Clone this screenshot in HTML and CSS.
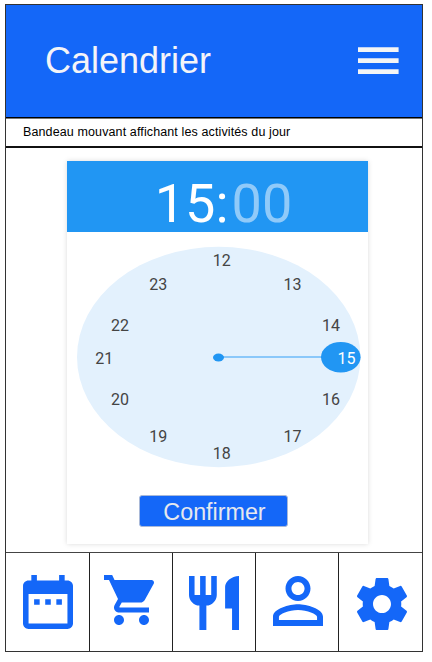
FILE: index.html
```html
<!DOCTYPE html>
<html lang="fr">
<head>
<meta charset="utf-8">
<title>Calendrier</title>
<link rel="stylesheet" href="styles.css">
</head>
<body>
<div class="app">
  <header class="header">
    <h1 class="title">Calendrier</h1>
    <svg class="menu" viewBox="0 0 41 28"><path d="M0 .3h40.6v4.7H0zM0 11.3h40.6V16H0zM0 22.3h40.6V27H0z"/></svg>
  </header>
  <div class="ticker">Bandeau mouvant affichant les activités du jour</div>
  <main class="content">
    <section class="picker">
      <div class="time"><span>15</span><span>:</span><span class="minutes">00</span></div>
      <svg class="clock" viewBox="67 232 301 246">
        <ellipse class="face" cx="218.7" cy="357" rx="141.7" ry="110.2"/>
        <path class="hand" d="M218 357H330"/>
        <ellipse class="knob" cx="218.5" cy="357.5" rx="5.5" ry="4"/>
        <ellipse class="knob" cx="340.8" cy="357.2" rx="19.8" ry="15.3"/>
        <g class="hours">
          <text x="221.8" y="266">12</text>
          <text x="292.5" y="290">13</text>
          <text x="331" y="331">14</text>
          <text class="selected" x="346.5" y="364">15</text>
          <text x="331" y="405">16</text>
          <text x="292.5" y="442">17</text>
          <text x="221.8" y="459">18</text>
          <text x="158.3" y="442">19</text>
          <text x="120" y="405">20</text>
          <text x="104.3" y="364">21</text>
          <text x="120" y="331">22</text>
          <text x="158.3" y="290">23</text>
        </g>
      </svg>
      <button class="confirm">Confirmer</button>
    </section>
  </main>
  <nav class="nav">
    <a class="tab"><svg class="calendar" viewBox="3 2 18 20" preserveAspectRatio="none"><path d="M9 11H7v2h2v-2zm4 0h-2v2h2v-2zm4 0h-2v2h2v-2zm2-7h-1V2h-2v2H8V2H6v2H5c-1.11 0-1.99.9-1.99 2L3 20c0 1.1.89 2 2 2h14c1.1 0 2-.9 2-2V6c0-1.1-.9-2-2-2zm0 16H5V9h14v11z"/></svg></a>
    <a class="tab"><svg class="cart" viewBox="1 2 20 20" preserveAspectRatio="none"><path d="M7 18c-1.1 0-1.99.9-1.99 2S5.9 22 7 22s2-.9 2-2-.9-2-2-2zM1 2v2h2l3.6 7.59-1.35 2.45c-.16.28-.25.61-.25.96 0 1.1.9 2 2 2h12v-2H7.42c-.14 0-.25-.11-.25-.25l.03-.12.9-1.63h7.45c.75 0 1.41-.41 1.75-1.03l3.58-6.49c.08-.14.12-.31.12-.48 0-.55-.45-1-1-1H5.21l-.94-2H1zm16 16c-1.1 0-1.99.9-1.99 2s.89 2 1.99 2 2-.9 2-2-.9-2-2-2z"/></svg></a>
    <a class="tab"><svg class="food" viewBox="3 2 18 20" preserveAspectRatio="none"><path d="M11 9H9V2H7v7H5V2H3v7c0 2.12 1.66 3.84 3.75 3.97V22h2.5v-9.03C11.34 12.84 13 11.12 13 9V2h-2v7zm5-3v8h2.5v8H21V2c-2.76 0-5 2.24-5 4z"/></svg></a>
    <a class="tab"><svg class="person" viewBox="4 4 16 16" preserveAspectRatio="none"><path d="M12 5.9c1.16 0 2.1.94 2.1 2.1s-.94 2.1-2.1 2.1S9.9 9.16 9.9 8s.94-2.1 2.1-2.1m0 9c2.97 0 6.1 1.46 6.1 2.1v1.1H5.9V17c0-.64 3.13-2.1 6.1-2.1M12 4C9.79 4 8 5.79 8 8s1.79 4 4 4 4-1.79 4-4-1.79-4-4-4zm0 9c-2.67 0-8 1.34-8 4v3h16v-3c0-2.66-5.33-4-8-4z"/></svg></a>
    <a class="tab"><svg class="gear" viewBox="2.27 2 19.46 20" preserveAspectRatio="none"><path d="M19.43 12.98c.04-.32.07-.64.07-.98s-.03-.66-.07-.98l2.11-1.65c.19-.15.24-.42.12-.64l-2-3.46c-.12-.22-.39-.3-.61-.22l-2.49 1c-.52-.4-1.08-.73-1.69-.98l-.38-2.65C14.46 2.18 14.25 2 14 2h-4c-.25 0-.46.18-.49.42l-.38 2.65c-.61.25-1.17.59-1.69.98l-2.49-1c-.23-.09-.49 0-.61.22l-2 3.46c-.13.22-.07.49.12.64l2.11 1.65c-.04.32-.07.65-.07.98s.03.66.07.98l-2.11 1.65c-.19.15-.24.42-.12.64l2 3.46c.12.22.39.3.61.22l2.49-1c.52.4 1.08.73 1.69.98l.38 2.65c.03.24.24.42.49.42h4c.25 0 .46-.18.49-.42l.38-2.65c.61-.25 1.17-.59 1.69-.98l2.49 1c.23.09.49 0 .61-.22l2-3.46c.12-.22.07-.49-.12-.64l-2.11-1.65zM12 15.5c-1.93 0-3.5-1.57-3.5-3.5s1.57-3.5 3.5-3.5 3.5 1.57 3.5 3.5-1.57 3.5-3.5 3.5z"/></svg></a>
  </nav>
</div>
</body>
</html>
```
FILE: styles.css
```css
* { box-sizing: border-box; }
body {
  margin: 0;
  padding: 4px 0 0 5px;
  background: #fff;
  font-family: "Liberation Sans", sans-serif;
}
.app {
  width: 418px;
  height: 648px;
  border: 1px solid #333;
  display: flex;
  flex-direction: column;
}
.header {
  height: 113px;
  display: flex;
  align-items: center;
  justify-content: space-between;
  padding: 0 23px 0 39px;
  background: #1467f8;
  border-bottom: 1px solid #000;
}
.title {
  margin: 0;
  color: #f4f4f8;
  font-size: 36px;
  font-weight: 400;
  line-height: 42px;
}
.menu { width: 41px; height: 28px; fill: #f5f5f5; }
.ticker {
  height: 30px;
  padding-left: 17px;
  border-top: 1px solid #777;
  border-bottom: 2px solid #111;
  color: #000;
  font-size: 12.5px;
  letter-spacing: .12px;
  line-height: 27px;
  white-space: nowrap;
}
.content { flex: 1; padding: 13px 0 0 61px; }
.picker {
  width: 301px;
  height: 383px;
  display: flex;
  flex-direction: column;
  align-items: center;
  background: #fff;
  box-shadow: 0 0 5px rgba(0, 0, 0, .15);
}
.time {
  width: 100%;
  height: 71px;
  padding: 11px 0 0 12px;
  display: flex;
  justify-content: center;
  background: #2196f3;
  color: #fff;
  font: 54px/64px Roboto, sans-serif;
}
.minutes { margin-left: 3px; color: #90caf9; }
.clock { display: block; width: 301px; height: 246px; }
.face { fill: #e3f1fd; }
.knob { fill: #2196f3; }
.hand { stroke: #6cbaf8; stroke-width: 1.5; }
.hours {
  fill: #444;
  font: 16px Roboto, sans-serif;
  text-anchor: middle;
}
.hours .selected { fill: #fff; }
.confirm {
  width: 149px;
  height: 32px;
  margin: 17px 0 0 -8px;
  padding: 2px 0 0 2px;
  border: 1px solid #a9b9d8;
  border-radius: 3px;
  background: #1467f8;
  color: #e6e8ee;
  font: 23.3px/28px "Liberation Sans", sans-serif;
}
.nav {
  height: 99px;
  display: grid;
  grid-template-columns: 84px 83px 83px 83px 1fr;
  border-top: 1px solid #444;
}
.tab { padding: 22px 0 0 17px; border-right: 1px solid #222; }
.tab:last-child { border-right: 0; }
.tab svg { display: block; fill: #1467f8; }
.calendar { width: 50px; height: 54px; }
.tab .cart { width: 50px; height: 50px; margin-left: -3px; }
.tab .food { width: 50px; height: 54px; margin: 1px 0 0 -1px; }
.tab .person { width: 50px; height: 50px; margin-top: 1px; }
.tab .gear { width: 50px; height: 52px; margin: 3px 0 0 1px; }
```
